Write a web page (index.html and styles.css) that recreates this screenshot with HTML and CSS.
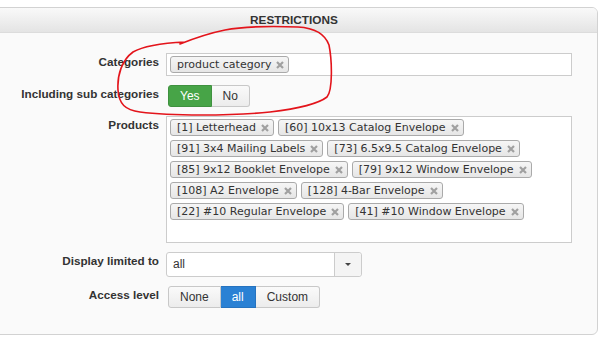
FILE: index.html
```html
<!DOCTYPE html>
<html>
<head>
<meta charset="utf-8">
<link rel="stylesheet" href="styles.css">
</head>
<body>
<div class="panel">
  <div class="panel-head">RESTRICTIONS</div>
  <div class="form">
    <div class="lbl">Categories</div>
    <div class="ctl">
      <div class="tagbox single">
        <span class="tag">product category<svg class="x" viewBox="0 0 8 8"><path d="M1 1L7 7M7 1L1 7"/></svg></span>
      </div>
    </div>

    <div class="lbl">Including sub categories</div>
    <div class="ctl">
      <div class="btn-group">
        <span class="btn success">Yes</span><span class="btn">No</span>
      </div>
    </div>

    <div class="lbl">Products</div>
    <div class="ctl">
      <div class="tagbox multi">
        <span class="tag">[1] Letterhead<svg class="x" viewBox="0 0 8 8"><path d="M1 1L7 7M7 1L1 7"/></svg></span>
        <span class="tag">[60] 10x13 Catalog Envelope<svg class="x" viewBox="0 0 8 8"><path d="M1 1L7 7M7 1L1 7"/></svg></span>
        <span class="tag">[91] 3x4 Mailing Labels<svg class="x" viewBox="0 0 8 8"><path d="M1 1L7 7M7 1L1 7"/></svg></span>
        <span class="tag">[73] 6.5x9.5 Catalog Envelope<svg class="x" viewBox="0 0 8 8"><path d="M1 1L7 7M7 1L1 7"/></svg></span>
        <span class="tag">[85] 9x12 Booklet Envelope<svg class="x" viewBox="0 0 8 8"><path d="M1 1L7 7M7 1L1 7"/></svg></span>
        <span class="tag">[79] 9x12 Window Envelope<svg class="x" viewBox="0 0 8 8"><path d="M1 1L7 7M7 1L1 7"/></svg></span>
        <span class="tag">[108] A2 Envelope<svg class="x" viewBox="0 0 8 8"><path d="M1 1L7 7M7 1L1 7"/></svg></span>
        <span class="tag">[128] 4-Bar Envelope<svg class="x" viewBox="0 0 8 8"><path d="M1 1L7 7M7 1L1 7"/></svg></span>
        <span class="tag">[22] #10 Regular Envelope<svg class="x" viewBox="0 0 8 8"><path d="M1 1L7 7M7 1L1 7"/></svg></span>
        <span class="tag">[41] #10 Window Envelope<svg class="x" viewBox="0 0 8 8"><path d="M1 1L7 7M7 1L1 7"/></svg></span>
      </div>
    </div>

    <div class="lbl">Display limited to</div>
    <div class="ctl">
      <div class="select">
        <span class="select-val">all</span>
        <span class="select-btn"><span class="caret"></span></span>
      </div>
    </div>

    <div class="lbl">Access level</div>
    <div class="ctl">
      <div class="btn-group">
        <span class="btn">None</span><span class="btn primary">all</span><span class="btn">Custom</span>
      </div>
    </div>
  </div>
</div>
<svg class="annot" width="598" height="342" viewBox="0 0 598 342">
  <path d="M185 42 C165 43 145 45 133 52 C122 60 117 75 118 90 C119 104 125 110 140 112 C170 116 230 116 270 112 C295 109 318 104 327 97 C333 90 332 60 329 45 C325 34 315 28 298 27 C270 26 240 27 225 30 C210 33 195 38 180 44"/>
</svg>
</body>
</html>
```
FILE: styles.css
```css
html, body {
  margin: 0;
  padding: 0;
  background: #ffffff;
}
body {
  position: relative;
  width: 598px;
  height: 342px;
  overflow: hidden;
  font-family: "Liberation Sans", Arial, sans-serif;
  font-size: 12px;
  color: #333;
}
.panel {
  box-sizing: border-box;
  width: 608px;
  margin: 7px 0 0 -10px;
  border: 1px solid #d2d2d2;
  border-radius: 0 6px 6px 0;
  background: #fafafa;
  overflow: hidden;
}
.panel-head {
  height: 24px;
  line-height: 25px;
  text-align: center;
  font-weight: bold;
  font-size: 11.8px;
  color: #333;
  background: linear-gradient(#f9f9f9, #e4e4e4);
  border-bottom: 1px solid #dcdcdc;
}
.form {
  display: grid;
  grid-template-columns: 168px 406px;
  column-gap: 7px;
  row-gap: 9px;
  padding: 20px 0 26px 0;
}
.lbl {
  text-align: right;
  font-weight: bold;
  font-size: 11.7px;
  line-height: 18px;
  color: #333;
  white-space: nowrap;
}
.ctl {
  display: flex;
  align-items: flex-start;
}
.tagbox {
  box-sizing: border-box;
  width: 406px;
  background: #fff;
  border: 1px solid #cccccc;
}
.tagbox.single {
  height: 23px;
  display: flex;
  align-items: center;
  padding: 0 3px;
}
.tagbox.multi {
  height: 127px;
  display: flex;
  flex-wrap: wrap;
  align-content: flex-start;
  gap: 4px 4px;
  padding: 2px 3px;
}
.tag {
  box-sizing: border-box;
  display: inline-flex;
  align-items: center;
  height: 17px;
  padding: 0 4px 0 6px;
  gap: 5px;
  border: 1px solid #aaaaaa;
  border-radius: 3px;
  background: linear-gradient(#f6f6f6, #e6e6e6);
  font-family: "DejaVu Sans", Verdana, sans-serif;
  font-size: 11px;
  color: #333;
  white-space: nowrap;
}
.x {
  width: 8px;
  height: 8px;
  margin-top: 1px;
}
.x path {
  stroke: #a0a0a0;
  stroke-width: 2.2;
  fill: none;
}
.btn-group {
  display: inline-flex;
  margin-left: 2px;
}
.btn {
  box-sizing: border-box;
  height: 22px;
  line-height: 20px;
  padding: 0 11px;
  border: 1px solid #c8c8c8;
  background: linear-gradient(#fafafa, #ececec);
  color: #333;
  font-size: 12px;
}
.btn + .btn {
  border-left: none;
}
.btn:first-child {
  border-radius: 3px 0 0 3px;
}
.btn:last-child {
  border-radius: 0 3px 3px 0;
}
.btn.success {
  background: #47a447;
  border-color: #3f913f;
  color: #fff;
}
.btn.primary {
  background: #2a81d4;
  border-color: #2673bf;
  color: #fff;
}
.select {
  box-sizing: border-box;
  display: flex;
  width: 196px;
  height: 25px;
  border: 1px solid #cccccc;
  border-radius: 3px;
  background: #fff;
}
.select-val {
  flex: 1;
  padding-left: 6px;
  line-height: 23px;
  font-size: 12px;
  color: #333;
}
.select-btn {
  display: flex;
  align-items: center;
  justify-content: center;
  width: 26px;
  border-left: 1px solid #cccccc;
  background: #f4f4f4;
  border-radius: 0 3px 3px 0;
}
.caret {
  width: 0;
  height: 0;
  border-left: 3px solid transparent;
  border-right: 3px solid transparent;
  border-top: 3px solid #444;
}
.annot {
  position: absolute;
  left: 0;
  top: 0;
  pointer-events: none;
}
.annot path {
  fill: none;
  stroke: #e3141b;
  stroke-width: 1.6;
  stroke-linecap: round;
}
```
